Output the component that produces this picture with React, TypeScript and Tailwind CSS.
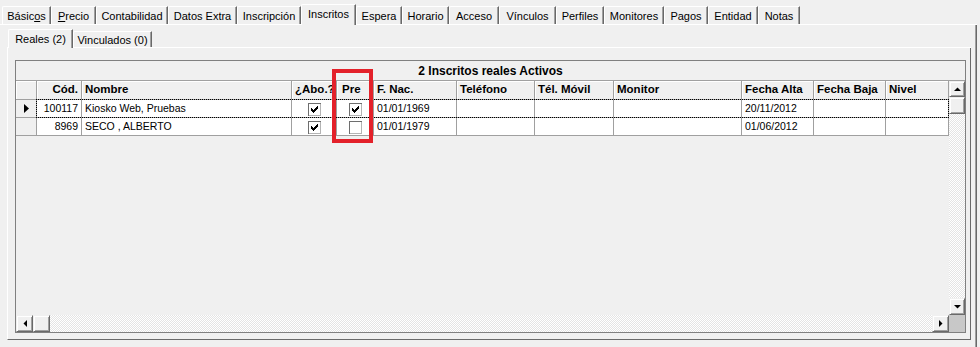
import React from "react";

type Tab = { label: React.ReactNode; w: string; active?: boolean };

const mainTabs: Tab[] = [
  { label: <>Básic<span className="underline">o</span>s</>, w: "w-[49px]" },
  { label: <><span className="underline">P</span>recio</>, w: "w-[45px]" },
  { label: "Contabilidad", w: "w-[72px]" },
  { label: "Datos Extra", w: "w-[69px]" },
  { label: "Inscripción", w: "w-[64px]" },
  { label: "Inscritos", w: "w-[55px]", active: true },
  { label: "Espera", w: "w-[46px]" },
  { label: "Horario", w: "w-[47px]" },
  { label: "Acceso", w: "w-[50px]" },
  { label: "Vínculos", w: "w-[57px]" },
  { label: "Perfiles", w: "w-[48px]" },
  { label: "Monitores", w: "w-[60px]" },
  { label: "Pagos", w: "w-[44px]" },
  { label: "Entidad", w: "w-[50px]" },
  { label: "Notas", w: "w-[42px]" },
];

const subTabs: Tab[] = [
  { label: "Reales (2)", w: "w-[65px]", active: true },
  { label: "Vinculados (0)", w: "w-[79px]" },
];

const cols = [
  { name: "Cód.", w: "w-[45px]", right: true },
  { name: "Nombre", w: "w-[210px]" },
  { name: "¿Abo.?", w: "w-[45px]" },
  { name: "Pre", w: "w-[37px]" },
  { name: "F. Nac.", w: "w-[83px]" },
  { name: "Teléfono", w: "w-[78px]" },
  { name: "Tél. Móvil", w: "w-[79px]" },
  { name: "Monitor", w: "w-[128px]" },
  { name: "Fecha Alta", w: "w-[72px]" },
  { name: "Fecha Baja", w: "w-[72px]" },
  { name: "Nivel", w: "w-[63px]" },
];

type Cell = string | boolean;

const rows: Cell[][] = [
  ["100117", "Kiosko Web, Pruebas", true, true, "01/01/1969", "", "", "", "20/11/2012", "", ""],
  ["8969", "SECO , ALBERTO", true, false, "01/01/1979", "", "", "", "01/06/2012", "", ""],
];

const raised =
  "border border-t-[#f0f0f0] border-l-[#f0f0f0] border-r-[#696969] border-b-[#696969] bg-[#f0f0f0] shadow-[inset_1px_1px_0_#ffffff,inset_-1px_-1px_0_#a0a0a0]";

const dither =
  "bg-[image:repeating-conic-gradient(#ffffff_0_25%,#e4e4e4_0_50%)] bg-[length:2px_2px]";

// 7x7 pixel tick used by the classic checkbox
const tick = [
  [6, 0], [5, 1], [6, 1], [0, 2], [4, 2], [5, 2], [6, 2],
  [0, 3], [1, 3], [3, 3], [4, 3], [5, 3], [0, 4], [1, 4], [2, 4], [3, 4], [4, 4],
  [1, 5], [2, 5], [3, 5], [2, 6],
];

function Check({ on }: { on: boolean }) {
  return (
    <svg width="13" height="13" viewBox="0 0 13 13" shapeRendering="crispEdges" className="block">
      <rect x="0" y="0" width="13" height="13" fill="#ffffff" />
      <path d="M0.5 13V0.5H13" fill="none" stroke="#6e6e6e" />
      <path d="M1 12.5H12.5V1" fill="none" stroke="#b4b4b4" />
      {on && tick.map(([x, y]) => <rect key={`${x}-${y}`} x={x + 3} y={y + 3} width="1" height="1" fill="#000" />)}
    </svg>
  );
}

function Arrow({ dir }: { dir: "up" | "down" | "left" | "right" }) {
  const pts = {
    up: "0,4 7,4 3.5,0.5",
    down: "0,0 7,0 3.5,3.5",
    left: "4,0 4,7 0.5,3.5",
    right: "0,0 0,7 3.5,3.5",
  }[dir];
  const horiz = dir === "up" || dir === "down";
  return (
    <svg width={horiz ? 7 : 4} height={horiz ? 4 : 7} viewBox={horiz ? "0 0 7 4" : "0 0 4 7"}>
      <polygon points={pts} fill="#000" />
    </svg>
  );
}

function MainTab({ tab }: { tab: Tab }) {
  if (tab.active) {
    return (
      <div
        className={`${tab.w} relative -mb-px flex h-[21px] shrink-0 justify-center rounded-tl-[2px] border-l border-t border-white border-r border-r-[#696969] bg-[#f0f0f0] pt-[4px] shadow-[inset_-1px_0_0_#a0a0a0]`}
      >
        {tab.label}
      </div>
    );
  }
  return (
    <div
      className={`${tab.w} flex h-[18px] shrink-0 items-center justify-center rounded-tl-[2px] border-l border-t border-white border-r border-r-[#696969] pt-[2px] shadow-[inset_-1px_0_0_#a0a0a0]`}
    >
      {tab.label}
    </div>
  );
}

function SubTab({ tab }: { tab: Tab }) {
  if (tab.active) {
    return (
      <div
        className={`${tab.w} relative -mb-px flex h-[19px] shrink-0 justify-center rounded-tl-[2px] border-l border-t border-white border-r border-r-[#696969] bg-[#f0f0f0] pt-[4px] shadow-[inset_-1px_0_0_#a0a0a0]`}
      >
        {tab.label}
      </div>
    );
  }
  return (
    <div
      className={`${tab.w} flex h-[16px] shrink-0 items-center justify-center rounded-tl-[2px] border-l border-t border-white border-r border-r-[#696969] pt-[2px] shadow-[inset_-1px_0_0_#a0a0a0]`}
    >
      {tab.label}
    </div>
  );
}

function DataRow({ row, current }: { row: Cell[]; current: boolean }) {
  return (
    <div className="relative flex h-[18px] shrink-0">
      <div className="flex w-[21px] shrink-0 items-center justify-center border-r border-b border-[#a0a0a0] bg-[#f0f0f0] pl-[1px]">
        {current && (
          <svg width="5" height="9" viewBox="0 0 5 9">
            <polygon points="0,0 5,4.5 0,9" fill="#000" />
          </svg>
        )}
      </div>
      {cols.map((c, i) => {
        const v = row[i];
        return (
          <div
            key={c.name}
            className={`${c.w} flex shrink-0 items-center overflow-hidden whitespace-nowrap border-r border-b border-[#a0a0a0] bg-white ${
              typeof v === "boolean" ? "justify-center pt-[1px]" : c.right ? "justify-end pr-[3px]" : "pl-[3px]"
            }`}
          >
            {typeof v === "boolean" ? <Check on={v} /> : v}
          </div>
        );
      })}
      {current && (
        <div className="pointer-events-none absolute top-[-1px] bottom-0 left-[20px] right-0 border border-dotted border-black" />
      )}
    </div>
  );
}

export default function App() {
  return (
    <div className="relative h-[347px] w-[980px] overflow-hidden bg-[#f0f0f0] font-['Liberation_Sans',Arial,sans-serif] text-black">
      {/* main page control */}
      <div className="flex h-[25px] w-[977px] items-end border-b border-white pl-[2px] text-[11px] leading-none">
        {mainTabs.map((t, i) => (
          <MainTab key={i} tab={t} />
        ))}
      </div>

      <div className="h-[322px] w-[977px] border-r border-r-[#696969] shadow-[inset_-1px_0_0_#a0a0a0]">
        <div className="ml-[7px] w-[964px]">
          {/* sub tabs */}
          <div className="flex h-[23px] items-end border-b border-white pl-[1px] text-[11px] leading-none">
            {subTabs.map((t, i) => (
              <SubTab key={i} tab={t} />
            ))}
          </div>

          <div className="h-[292px] border-l border-white border-r border-r-[#696969] border-b border-b-[#696969] pl-[7px] pt-[12px]">
            {/* grid */}
            <div className="flex h-[273px] w-[951px] flex-col border border-[#808080] text-[10.5px] leading-none">
              <div className="flex h-[20px] shrink-0 items-center justify-center border-b border-[#a0a0a0] text-[12px] font-bold">
                2 Inscritos reales Activos
              </div>

              <div className="flex min-h-0 flex-1">
                <div className="flex w-[933px] flex-col">
                  <div className="flex h-[19px] shrink-0 text-[11.5px] font-bold">
                    <div className="w-[21px] shrink-0 border-r border-b border-[#a0a0a0] shadow-[inset_1px_1px_0_#ffffff]" />
                    {cols.map((c) => (
                      <div
                        key={c.name}
                        className={`${c.w} flex shrink-0 items-center whitespace-nowrap border-r border-b border-[#a0a0a0] shadow-[inset_1px_1px_0_#ffffff] ${
                          c.right ? "justify-end pr-[3px]" : c.name === "Pre" ? "pl-[5px]" : "pl-[3px]"
                        }`}
                      >
                        {c.name}
                      </div>
                    ))}
                  </div>
                  {rows.map((r, i) => (
                    <DataRow key={i} row={r} current={i === 0} />
                  ))}
                  <div className="flex-1" />
                </div>

                {/* vertical scrollbar */}
                <div className="flex w-[16px] flex-col">
                  <div className={`flex h-[16px] shrink-0 items-center justify-center ${raised}`}>
                    <Arrow dir="up" />
                  </div>
                  <div className={`h-[17px] shrink-0 ${raised}`} />
                  <div className={`flex-1 ${dither}`} />
                  <div className={`flex h-[17px] shrink-0 items-center justify-center ${raised}`}>
                    <Arrow dir="down" />
                  </div>
                </div>
              </div>

              {/* horizontal scrollbar */}
              <div className="flex h-[17px] shrink-0">
                <div className="flex w-[933px]">
                  <div className={`flex w-[17px] shrink-0 items-center justify-center ${raised}`}>
                    <Arrow dir="left" />
                  </div>
                  <div className={`w-[17px] shrink-0 ${raised}`} />
                  <div className={`flex-1 ${dither}`} />
                  <div className={`flex w-[17px] shrink-0 items-center justify-center ${raised}`}>
                    <Arrow dir="right" />
                  </div>
                </div>
                <div className="w-[16px] bg-[#c8c8c8]" />
              </div>
            </div>
          </div>
        </div>
      </div>

      {/* highlight marker drawn over the Pre column */}
      <div className="pointer-events-none absolute left-[332px] top-[69px] h-[74px] w-[41px] border-4 border-[#e3212a]" />
    </div>
  );
}
